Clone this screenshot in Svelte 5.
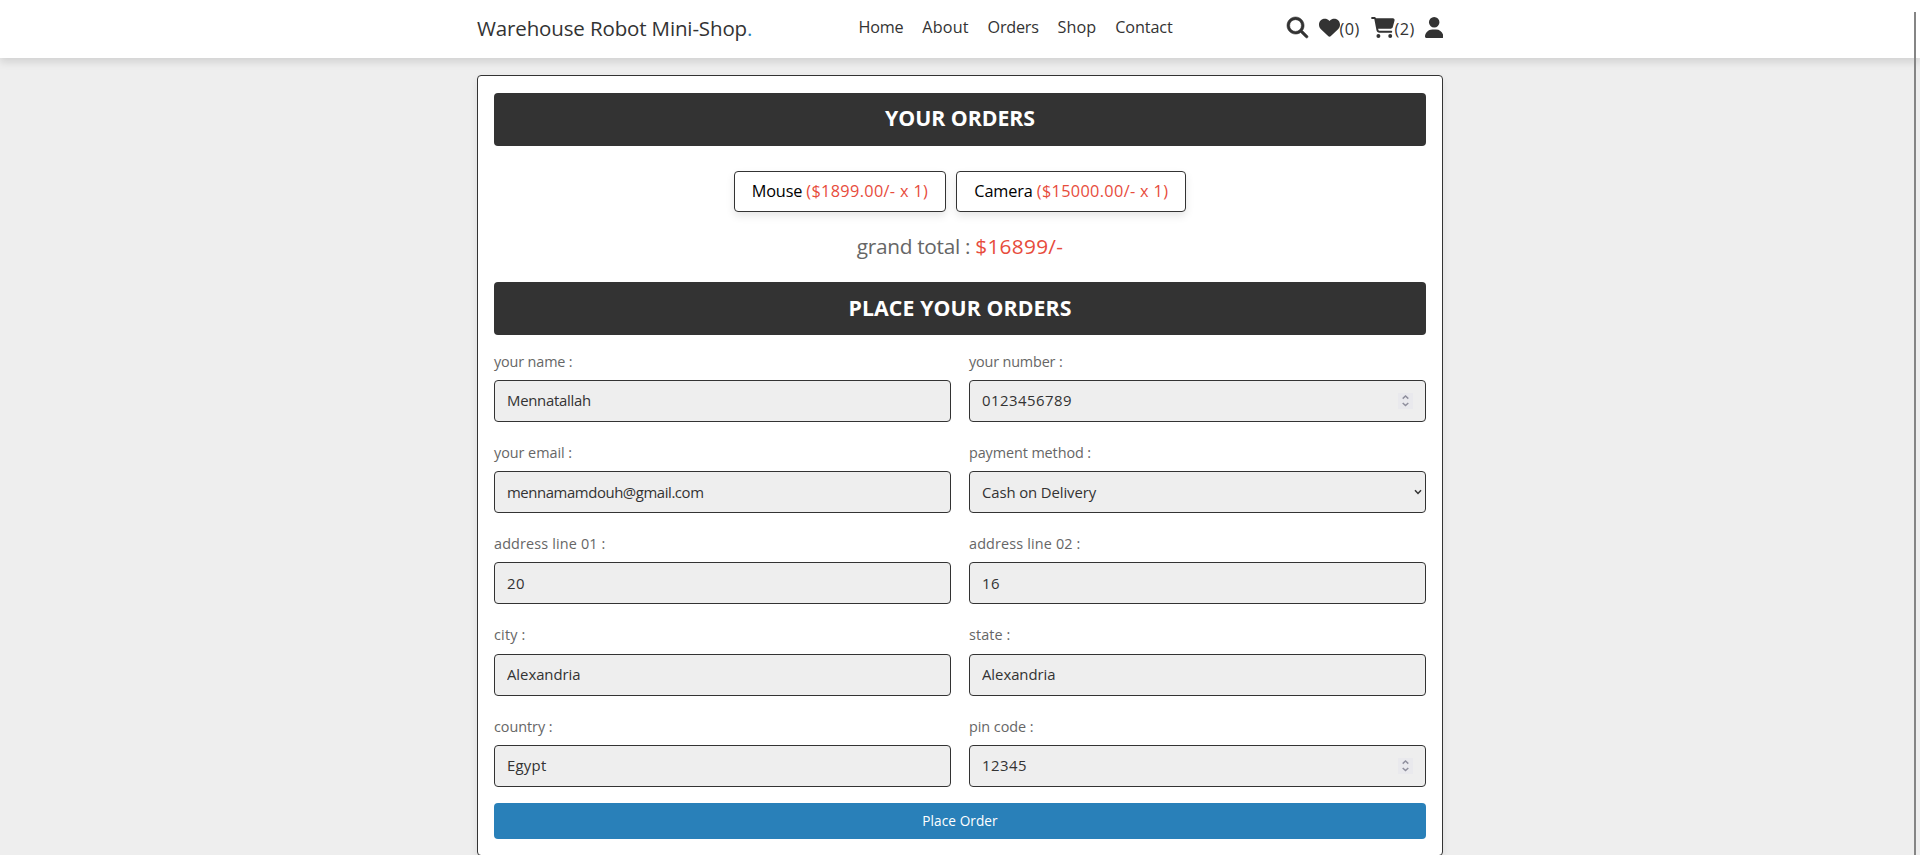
<script>
  const nav = [
    { text: 'Home', width: 45 },
    { text: 'About', width: 46.5 },
    { text: 'Orders', width: 51 },
    { text: 'Shop', width: 39 },
    { text: 'Contact', width: 57.5 }
  ];
  const items = [
    { name: 'Mouse', nameWidth: 50.5, detail: '($1899.00/- x 1)', width: 122 },
    { name: 'Camera', nameWidth: 58.5, detail: '($15000.00/- x 1)', width: 131.5 }
  ];
  const fields = [
    { label: 'your name :', lw: 78.5, value: 'Mennatallah', vw: 84 },
    { label: 'your number :', lw: 93.5, value: '0123456789', vw: 90, kind: 'number' },
    { label: 'your email :', lw: 78, value: 'mennamamdouh@gmail.com', vw: 196.5 },
    { label: 'payment method :', lw: 122, value: 'Cash on Delivery', vw: 114, kind: 'select' },
    { label: 'address line 01 :', lw: 111.5, value: '20', vw: 18 },
    { label: 'address line 02 :', lw: 111.5, value: '16', vw: 18 },
    { label: 'city :', lw: 31.5, value: 'Alexandria', vw: 73.5 },
    { label: 'state :', lw: 41.5, value: 'Alexandria', vw: 73.5 },
    { label: 'country :', lw: 58.5, value: 'Egypt', vw: 39.5 },
    { label: 'pin code :', lw: 64.5, value: '12345', vw: 45, kind: 'number' }
  ];

  const ctx = document.createElement('canvas').getContext('2d');

  // Tracks the text so that it takes up the given advance width.
  function track(node, width) {
    const text = node.tagName === 'INPUT' || node.tagName === 'SELECT' ? node.value : node.textContent;
    const s = getComputedStyle(node);
    ctx.font = `${s.fontWeight} ${s.fontSize} ${s.fontFamily}`;
    node.style.letterSpacing = `${(width - ctx.measureText(text).width) / text.length}px`;
  }
</script>

<header>
  <div class="bar">
    <a class="logo" href="#home"><span use:track={270}>Warehouse Robot Mini-Shop</span><i>.</i></a>
    <nav>
      {#each nav as link}
        <a href="#{link.text}" use:track={link.width}>{link.text}</a>
      {/each}
    </nav>
    <div class="icons">
      <a class="search" href="#search" aria-label="Search">
        <svg viewBox="0 0 512 512" width="21" height="21"><path d="M416 208c0 45.9-14.9 88.3-40 122.7L502.6 457.4c12.5 12.5 12.5 32.8 0 45.3s-32.8 12.5-45.3 0L330.7 376c-34.4 25.2-76.8 40-122.7 40C93.1 416 0 322.9 0 208S93.1 0 208 0S416 93.1 416 208zM208 352a144 144 0 1 0 0-288 144 144 0 1 0 0 288z" /></svg>
      </a>
      <a class="wish" href="#wishlist">
        <svg viewBox="0 0 512 512" width="21" height="21"><path d="M47.6 300.4L228.3 469.1c7.5 7 17.4 10.9 27.7 10.9s20.2-3.9 27.7-10.9L464.4 300.4c30.4-28.3 47.6-68 47.6-109.5v-5.8c0-69.9-50.5-129.5-119.4-141C347 36.5 300.6 51.4 268 84L256 96 244 84c-32.6-32.6-79-47.5-124.6-39.9C50.5 55.6 0 115.2 0 185.1v5.8c0 41.5 17.2 81.2 47.6 109.5z" /></svg><span use:track={20}>(0)</span>
      </a>
      <a class="cart" href="#cart">
        <svg viewBox="0 0 576 512" width="24" height="21"><path d="M0 24C0 10.7 10.7 0 24 0H69.5c22 0 41.5 12.8 50.6 32h411c26.3 0 45.5 25 38.6 50.4l-41 152.3c-8.5 31.4-37 53.3-69.5 53.3H170.7l5.4 28.5c2.2 11.3 12.1 19.5 23.6 19.5H488c13.3 0 24 10.7 24 24s-10.7 24-24 24H199.7c-34.6 0-64.3-24.6-70.7-58.5L77.4 54.5c-.7-3.8-4-6.5-7.9-6.5H24C10.7 48 0 37.3 0 24zM128 464a48 48 0 1 1 96 0 48 48 0 1 1 -96 0zm336-48a48 48 0 1 1 0 96 48 48 0 1 1 0-96z" /></svg><span use:track={20}>(2)</span>
      </a>
      <a class="user" href="#account" aria-label="Account">
        <svg viewBox="0 0 448 512" width="18.4" height="21"><path d="M224 256A128 128 0 1 0 224 0a128 128 0 1 0 0 256zm-45.7 48C79.8 304 0 383.8 0 482.3C0 498.7 13.3 512 29.7 512H418.3c16.4 0 29.7-13.3 29.7-29.7C448 383.8 368.2 304 269.7 304H178.3z" /></svg>
      </a>
    </div>
  </div>
</header>

<main>
  <h3 class="first"><span use:track={150}>YOUR ORDERS</span></h3>
  <div class="items">
    {#each items as item}
      <p><span use:track={item.nameWidth}>{item.name}</span><b use:track={item.width}>{item.detail}</b></p>
    {/each}
  </div>
  <div class="total"><span use:track={113.5}>grand total :</span><b use:track={88}>$16899/-</b></div>
  <h3><span use:track={223}>PLACE YOUR ORDERS</span></h3>
  <form>
    {#each fields as f, i}
      <div class="field">
        <label for="f{i}"><span use:track={f.lw}>{f.label}</span></label>
        <div class="control">
          {#if f.kind === 'select'}
            <select id="f{i}" use:track={f.vw}><option>{f.value}</option></select>
            <svg class="chevron" viewBox="0 0 8 6" width="8" height="6"><path d="M1 1.2 4 4.4 7 1.2" /></svg>
          {:else}
            <input id="f{i}" type="text" value={f.value} use:track={f.vw} />
            {#if f.kind === 'number'}
              <svg class="spin" viewBox="0 0 15 16" width="15" height="16"><path d="M4.7 5.6 7.5 3 10.3 5.6M4.7 10 7.5 12.6 10.3 10" /></svg>
            {/if}
          {/if}
        </div>
      </div>
    {/each}
  </form>
  <button type="button"><span use:track={75.5}>Place Order</span></button>
</main>

<div class="scroll-thumb"></div>

<style>
  :global(body) {
    background: #eee;
    height: 855px;
    overflow: hidden;
  }
  :global(#app) {
    font-family: 'Open Sans', 'Noto Sans', sans-serif;
    color: #333;
  }
  a { color: #333; text-decoration: none; }
  span, b { white-space: pre; }
  b { font-weight: 400; color: #e74c3c; }
  svg { display: block; fill: #333; flex: none; }

  header {
    position: relative;
    height: 58px;
    background: #fff;
    box-shadow: 0 4px 8px rgba(0, 0, 0, 0.12);
  }
  .bar {
    width: 966px;
    height: 54px;
    margin: 0 auto;
    display: grid;
    grid-template-columns: 381.5px 1fr auto;
    align-items: center;
  }
  .logo { padding-top: 1px; font-size: 20.5px; line-height: 24px; }
  .logo i { color: #2980b9; font-style: normal; }
  nav { display: flex; gap: 18.8px; font-size: 16.2px; line-height: 20px; }
  .icons { display: flex; align-items: center; font-size: 16.3px; }
  .icons a { display: flex; align-items: center; }
  .icons span { padding-top: 4px; line-height: 20px; }
  .search svg { overflow: visible; stroke: #333; stroke-width: 14; }
  .wish { margin-left: 11px; }
  .cart { margin-left: 11px; }
  .user { margin-left: 10px; }

  main {
    box-sizing: border-box;
    width: 966px;
    height: 781px;
    margin: 17px auto 0;
    padding: 17px 16px;
    background: #fff;
    border: 1px solid #333;
    border-radius: 4px;
    box-shadow: 0 4px 8px rgba(0, 0, 0, 0.08);
  }
  h3 {
    display: flex;
    align-items: center;
    justify-content: center;
    box-sizing: border-box;
    height: 53px;
    margin: 0;
    padding-bottom: 1px;
    background: #333;
    color: #fff;
    border-radius: 4px;
    font-size: 21.3px;
    line-height: 28px;
    font-weight: 700;
  }
  h3.first { padding-bottom: 3px; }
  .items { display: flex; justify-content: center; gap: 10px; margin-top: 25px; }
  .items p {
    box-sizing: border-box;
    height: 41px;
    margin: 0;
    padding: 0 17px 1px;
    display: flex;
    align-items: center;
    gap: 4px;
    color: #000;
    font-size: 16.3px;
    line-height: 22px;
    border: 1px solid #333;
    border-radius: 4px;
    box-shadow: 0 4px 8px rgba(0, 0, 0, 0.1);
  }
  .total {
    display: flex;
    justify-content: center;
    gap: 5px;
    margin: 23px 0;
    height: 24px;
    line-height: 23px;
    font-size: 20.8px;
    color: #666;
  }
  form { display: grid; grid-template-columns: 457px 457px; column-gap: 18px; }
  .field { height: 91.2px; padding-top: 16.8px; box-sizing: border-box; }
  label { display: block; height: 20px; margin-bottom: 8.2px; line-height: 20px; font-size: 14.4px; color: #666; }
  .control { position: relative; height: 42px; }
  input, select {
    box-sizing: border-box;
    width: 100%;
    height: 100%;
    margin: 0;
    padding: 0 12px 1px;
    border: 1px solid #333;
    border-radius: 4px;
    background: #eee;
    color: #333;
    font: 14.9px 'Open Sans', 'Noto Sans', sans-serif;
    appearance: none;
    outline: none;
  }
  .chevron, .spin { position: absolute; fill: none; stroke: #333; stroke-width: 1.5; }
  .chevron { right: 4px; top: 18px; }
  .spin { right: 13px; top: 13px; background: #e9e9ed; stroke: #8f8f9d; }
  button {
    display: block;
    width: 100%;
    height: 36px;
    margin-top: 12px;
    padding: 0;
    border: 0;
    border-radius: 4px;
    background: #2980b9;
    color: #fff;
    font: 13.6px 'Open Sans', 'Noto Sans', sans-serif;
  }
  .scroll-thumb {
    position: fixed;
    top: 12px;
    right: 4px;
    width: 2px;
    height: 843px;
    background: #858585;
  }
</style>
